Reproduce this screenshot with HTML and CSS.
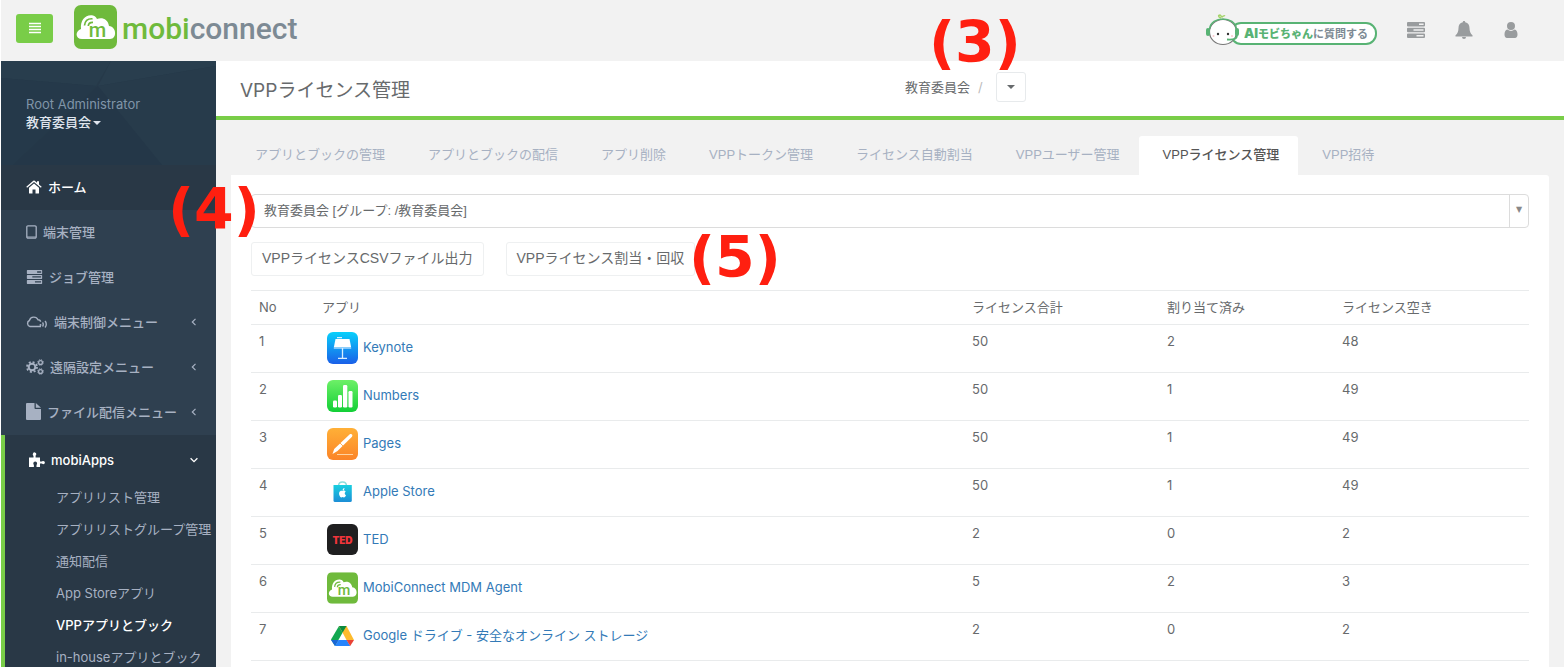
FILE: index.html
```html
<!DOCTYPE html>
<html lang="ja">

<head>
    <meta charset="UTF-8">
    <title>VPPライセンス管理</title>
    <link rel="stylesheet" href="styles.css">
</head>

<body>
    <!-- shared icons -->
    <svg class="defs" width="0" height="0">
        <symbol id="mobi" viewBox="0 0 43 44">
            <rect width="43" height="44" rx="7" fill="#6fba3c" />
            <path d="M8 34C1 34 1 26 7 24C6 15 12 9 19 10.500C21 11 22 12 23 14C28 12 34 14 35 21C43 22 43 34 36 34Z" fill="#fff" />
            <path d="M10.500 20.500C11 16 14 13.500 18.500 13.800M14.300 21C14.500 18.500 16.200 17.300 19 17.400" fill="none" stroke="#6fba3c" stroke-width="1.700" />
        </symbol>
        <symbol id="tasks" viewBox="0 0 18 16">
            <path fill-rule="evenodd" fill="currentColor" d="M1 0h16a1 1 0 0 1 1 1v2.500a1 1 0 0 1-1 1H1a1 1 0 0 1-1-1V1a1 1 0 0 1 1-1zM12 1.500h4.600V3H12zM1 5.700h16a1 1 0 0 1 1 1v2.500a1 1 0 0 1-1 1H1a1 1 0 0 1-1-1V6.700a1 1 0 0 1 1-1zM6.500 7.200h10v1.500h-10zM1 11.400h16a1 1 0 0 1 1 1v2.500a1 1 0 0 1-1 1H1a1 1 0 0 1-1-1v-2.500a1 1 0 0 1 1-1zM9.500 12.900h7v1.500h-7z" />
        </symbol>
        <symbol id="left" viewBox="0 0 8 8">
            <path d="M5.500 .8L2.300 4l3.200 3.200" fill="none" stroke="currentColor" stroke-width="1.200" />
        </symbol>
        <symbol id="down" viewBox="0 0 8 8">
            <path d="M.6 2.300L4 5.700l3.400-3.400" fill="none" stroke="currentColor" stroke-width="1.300" />
        </symbol>
    </svg>

    <div class="page">
        <header class="topbar">
            <button type="button" class="minimalize" aria-label="メニュー">
                <svg width="12" height="12" viewBox="0 0 12 12"><path d="M0 1.500h12M0 4.500h12M0 7.500h12M0 10.500h12" stroke="#fff" stroke-width="1.500" /></svg>
            </button>
            <a href="#" class="brand">
                <svg width="43" height="44" viewBox="0 0 43 44"><use href="#mobi" width="43" height="44" /><text class="mobi-m" x="23.500" y="32" text-anchor="middle">m</text></svg>
                <span class="brand-name"><span class="brand-mobi">mobi</span>connect</span>
            </a>
            <nav class="top-links">
                <a href="#" class="ai-chat">
                    <svg class="ai-face" width="34" height="32" viewBox="0 0 34 32">
                        <path d="M15 4c-3-1-3-3-1-3l2 2c1-1 2-2 3-1" fill="none" stroke="#a5d46a" stroke-width="1.500" />
                        <ellipse cx="17" cy="18" rx="13.500" ry="12.500" fill="#fff" stroke="#777" stroke-width="1.200" />
                        <path d="M3.500 15C5 1.500 29 1.500 30.500 15" fill="none" stroke="#58b374" stroke-width="1.500" />
                        <rect x="0" y="14" width="4" height="8" rx="2" fill="#58b374" />
                        <rect x="29" y="14" width="4" height="8" rx="2" fill="#58b374" />
                        <path d="M31 21c0 4-3 5-10 4.500" fill="none" stroke="#58b374" stroke-width="1.800" />
                        <circle cx="12" cy="20" r="1.200" fill="#333" />
                        <circle cx="22" cy="20" r="1.200" fill="#333" />
                        <circle cx="7.500" cy="22" r="1" fill="#fbc9cf" />
                        <circle cx="26" cy="22" r="1" fill="#fbc9cf" />
                    </svg>
                    <span class="ai-label"><b><span class="ai-big">AI</span>モビちゃん</b>に質問する</span>
                </a>
                <a href="#" aria-label="ジョブ"><svg width="18" height="16"><use href="#tasks" /></svg></a>
                <a href="#" aria-label="通知">
                    <svg width="18" height="18" viewBox="0 0 18 18"><path fill="currentColor" d="M9 0c.8 0 1.200.5 1.200 1.300 3 .6 4.300 3 4.300 5.700 0 3.500 1 5.500 3 7.300V15.500H.5V14.300c2-1.800 3-3.800 3-7.300 0-2.700 1.300-5.100 4.300-5.700C7.800.5 8.200 0 9 0zM7 16h4a2 2 0 0 1-4 0z" /></svg>
                </a>
                <a href="#" aria-label="ユーザー">
                    <svg width="16" height="16" viewBox="0 0 16 16"><path fill="currentColor" d="M8 0a4 4 0 1 1 0 8 4 4 0 0 1 0-8zM4.500 7.500a5 5 0 0 0 7 0c2.200.2 3 2.500 3 5 0 2-1 3.500-2.500 3.500H4c-1.500 0-2.500-1.500-2.500-3.500 0-2.500.8-4.800 3-5z" /></svg>
                </a>
            </nav>
        </header>

        <div class="body-row">
            <aside class="sidebar">
                <div class="profile">
                    <svg class="profile-bg" viewBox="0 0 215 104" preserveAspectRatio="none">
                        <path d="M0 0h110L95 25 0 17z" fill="#283d4d" />
                        <path d="M0 17l95 8-83 79H0z" fill="#25394a" />
                        <path d="M110 0h105v5L97 25z" fill="#293e4e" />
                        <path d="M97 25l32 35 32 44H12z" fill="#243748" />
                        <path d="M97 25L215 5v99h-54z" fill="#273b4b" />
                    </svg>
                    <div class="role">Root Administrator</div>
                    <a href="#" class="org">教育委員会<span class="caret"></span></a>
                </div>
                <nav>
                    <a href="#" class="item home">
                        <svg width="16" height="14" viewBox="0 0 16 14"><path fill="currentColor" d="M8 3.500l5 4.300V13a.6.6 0 0 1-.6.6H9.500V9.500h-3v4.100H3.600A.6.600 0 0 1 3 13V7.800zM.3 6.800L7.300.8a1 1 0 0 1 1.400 0l2.300 2V1.200h2v3.300l2.700 2.300-.8.900L8 2 1.100 7.700z" /></svg>
                        ホーム
                    </a>
                    <a href="#" class="item">
                        <svg width="11" height="14" viewBox="0 0 11 14"><path fill="none" stroke="currentColor" stroke-width="1.300" d="M2 .8h7a1.200 1.200 0 0 1 1.200 1.200v10A1.200 1.200 0 0 1 9 13.200H2A1.200 1.200 0 0 1 .8 12V2A1.200 1.200 0 0 1 2 .8z" /><path stroke="currentColor" d="M1 12h9" /></svg>
                        端末管理
                    </a>
                    <a href="#" class="item">
                        <svg width="17" height="14" viewBox="0 0 18 16"><use href="#tasks" width="18" height="16" /></svg>
                        ジョブ管理
                    </a>
                    <a href="#" class="item">
                        <svg width="22" height="14" viewBox="0 0 22 14"><path fill="none" stroke="currentColor" stroke-width="1.400" d="M15 11.500H4a3.200 3.200 0 0 1-.6-6A4.600 4.600 0 0 1 12 4.800c2 0 2.500 1 2.600 2M16.500 7.500c1 1 1 3 0 4M19 6c1.700 1.500 1.700 5 0 6.500" /><circle cx="14.500" cy="10" r="1" fill="currentColor" /></svg>
                        端末制御メニュー
                        <svg class="arrow" width="8" height="8"><use href="#left" /></svg>
                    </a>
                    <a href="#" class="item">
                        <svg width="18" height="16" viewBox="0 0 18 16"><g fill="none" stroke="currentColor"><circle cx="6" cy="8" r="3.300" stroke-width="2" /><circle cx="6" cy="8" r="5" stroke-width="1.800" stroke-dasharray="2 1.930" /><circle cx="14.500" cy="3.500" r="1.900" stroke-width="1.300" /><circle cx="14.500" cy="3.500" r="2.800" stroke-width="1" stroke-dasharray="1.200 1" /><circle cx="14.500" cy="12.500" r="1.900" stroke-width="1.300" /><circle cx="14.500" cy="12.500" r="2.800" stroke-width="1" stroke-dasharray="1.200 1" /></g></svg>
                        遠隔設定メニュー
                        <svg class="arrow" width="8" height="8"><use href="#left" /></svg>
                    </a>
                    <a href="#" class="item">
                        <svg width="15" height="17" viewBox="0 0 15 17"><path fill="currentColor" d="M1 0h7.500v5a1 1 0 0 0 1 1H15v10a1 1 0 0 1-1 1H1a1 1 0 0 1-1-1V1a1 1 0 0 1 1-1zM9.800 0L15 4.800H9.800z" /></svg>
                        ファイル配信メニュー
                        <svg class="arrow" width="8" height="8"><use href="#left" /></svg>
                    </a>
                    <div class="section">
                        <a href="#" class="item">
                            <svg width="16" height="16" viewBox="0 0 16 16"><path fill="currentColor" d="M0 5.500h4.500V4A2 2 0 0 1 4 1.500 1.700 1.700 0 0 1 7.300 2c0 1-.7 1.300-.7 2v1.500h4.400v4h1.500c.7 0 1-.6 1.700-.6a1.700 1.700 0 0 1 0 3.400c-.8 0-1-.7-1.700-.7H11V15H7.500v-1.800c0-.5.600-1 .6-1.700a1.900 1.900 0 0 0-3.800 0c0 .7.600 1.200.6 1.700V15H0z" /></svg>
                            mobiApps
                            <svg class="arrow" width="8" height="8"><use href="#down" /></svg>
                        </a>
                        <ul class="submenu">
                            <li><a href="#">アプリリスト管理</a></li>
                            <li><a href="#">アプリリストグループ管理</a></li>
                            <li><a href="#">通知配信</a></li>
                            <li><a href="#">App Storeアプリ</a></li>
                            <li><a href="#" class="current">VPPアプリとブック</a></li>
                            <li><a href="#">in-houseアプリとブック</a></li>
                        </ul>
                    </div>
                </nav>
            </aside>

            <main class="content">
                <div class="heading">
                    <h1>VPPライセンス管理</h1>
                    <div class="breadcrumb">
                        <a href="#">教育委員会</a><span class="slash">/</span>
                        <button type="button" aria-label="グループ選択"><span class="caret"></span></button>
                    </div>
                </div>

                <div class="wrapper">
                    <nav class="tabs">
                        <a href="#">アプリとブックの管理</a>
                        <a href="#">アプリとブックの配信</a>
                        <a href="#">アプリ削除</a>
                        <a href="#">VPPトークン管理</a>
                        <a href="#">ライセンス自動割当</a>
                        <a href="#">VPPユーザー管理</a>
                        <a href="#" class="active">VPPライセンス管理</a>
                        <a href="#">VPP招待</a>
                    </nav>
                    <div class="panel">
                        <div class="group-select">
                            <select aria-label="グループ">
                                <option>教育委員会 [グループ: /教育委員会]</option>
                            </select>
                        </div>
                        <div class="buttons">
                            <button type="button">VPPライセンスCSVファイル出力</button>
                            <button type="button">VPPライセンス割当・回収</button>
                        </div>
                        <table>
                            <thead>
                                <tr>
                                    <th class="no">No</th>
                                    <th>アプリ</th>
                                    <th class="total">ライセンス合計</th>
                                    <th class="used">割り当て済み</th>
                                    <th class="free">ライセンス空き</th>
                                </tr>
                            </thead>
                            <tbody>
                                <tr>
                                    <td>1</td>
                                    <td><a href="#" class="app">
                                        <svg width="31" height="32" viewBox="0 0 31 32"><defs><linearGradient id="kn" x2="0" y2="1"><stop stop-color="#08d0fb" /><stop offset="1" stop-color="#1a5fe8" /></linearGradient></defs><rect width="31" height="32" rx="6" fill="url(#kn)" /><path d="M8.500 7h14l1.700 8.500H6.800z" fill="#fff" /><path d="M6.800 16.300h17.400" stroke="#9fd4ff" /><path d="M15.500 16v10M11 26.300h9M10 5.700h5" stroke="#d9f0ff" stroke-width="1.300" /></svg>
                                        Keynote</a></td>
                                    <td>50</td>
                                    <td>2</td>
                                    <td>48</td>
                                </tr>
                                <tr>
                                    <td>2</td>
                                    <td><a href="#" class="app">
                                        <svg width="31" height="32" viewBox="0 0 31 32"><defs><linearGradient id="nm" x2="0" y2="1"><stop stop-color="#6df067" /><stop offset="1" stop-color="#12cf36" /></linearGradient></defs><rect width="31" height="32" rx="6" fill="url(#nm)" /><g fill="#fff"><rect x="6" y="20.500" width="4" height="7" rx="1.200" /><rect x="11" y="15" width="4" height="12.500" rx="1.200" /><rect x="16" y="5" width="4.300" height="22.500" rx="1.300" /><rect x="21.500" y="11" width="4" height="16.500" rx="1.200" /></g></svg>
                                        Numbers</a></td>
                                    <td>50</td>
                                    <td>1</td>
                                    <td>49</td>
                                </tr>
                                <tr>
                                    <td>3</td>
                                    <td><a href="#" class="app">
                                        <svg width="31" height="32" viewBox="0 0 31 32"><defs><linearGradient id="pg" x2="0" y2="1"><stop stop-color="#ffb037" /><stop offset="1" stop-color="#fb8428" /></linearGradient></defs><rect width="31" height="32" rx="6" fill="url(#pg)" /><path d="M5.500 26l1.700-5L22.500 6.500c2-1.300 3.600.3 2.500 2.300L10.500 23z" fill="#fff" /><path d="M13 15l3.500 3.500" stroke="#fd9a30" stroke-width=".8" /><path d="M10 26.500h16" stroke="#ffd2a0" /></svg>
                                        Pages</a></td>
                                    <td>50</td>
                                    <td>1</td>
                                    <td>49</td>
                                </tr>
                                <tr>
                                    <td>4</td>
                                    <td><a href="#" class="app">
                                        <svg width="31" height="32" viewBox="0 0 31 32"><defs><linearGradient id="as" x2="0" y2="1"><stop stop-color="#18cfe0" /><stop offset="1" stop-color="#1c8ed6" /></linearGradient></defs><path d="M11.500 10c0-5.500 8-5.500 8 0" fill="none" stroke="#8edfdc" stroke-width="1.500" /><path d="M6.500 9h18.300v15.500a1.500 1.500 0 0 1-1.500 1.500H8a1.500 1.500 0 0 1-1.500-1.500z" fill="url(#as)" /><path d="M15.500 15c1.200-.8 2.500-.5 3.200.5-1.500 1-1.200 3 .3 3.700-1 2.300-1.800 2.500-3.300 1.900-1.800.7-2.500.1-3.200-1.600-1.200-3 .5-5.500 3-4.500zM15.600 14.500c0-1.300.7-2.200 1.900-2.500 0 1.300-.7 2.300-1.900 2.500z" fill="#fff" /></svg>
                                        Apple Store</a></td>
                                    <td>50</td>
                                    <td>1</td>
                                    <td>49</td>
                                </tr>
                                <tr>
                                    <td>5</td>
                                    <td><a href="#" class="app">
                                        <svg width="31" height="32" viewBox="0 0 31 32"><rect width="31" height="31" rx="6" fill="#1f1f20" /><text class="ted" x="15.500" y="19.500" text-anchor="middle">TED</text></svg>
                                        TED</a></td>
                                    <td>2</td>
                                    <td>0</td>
                                    <td>2</td>
                                </tr>
                                <tr>
                                    <td>6</td>
                                    <td><a href="#" class="app">
                                        <svg width="31" height="32" viewBox="0 0 43 44"><use href="#mobi" width="43" height="44" /><text class="mobi-m" x="23.500" y="32" text-anchor="middle">m</text></svg>
                                        MobiConnect MDM Agent</a></td>
                                    <td>5</td>
                                    <td>2</td>
                                    <td>3</td>
                                </tr>
                                <tr>
                                    <td>7</td>
                                    <td><a href="#" class="app">
                                        <svg width="31" height="32" viewBox="0 0 31 32"><path d="M12 6h7.500l-4 6.500z" fill="#0b8a3d" /><path d="M12 6l3.700 6.500L8 26l-4-6.500z" fill="#12a850" /><path d="M12 6h7.500l7.500 14h-7.500z" fill="#fdbb2d" /><path d="M12 6h7.500l-3.800 6.500z" fill="#0b8a3d" /><path d="M11.500 20h8.300l3.400 6H8z" fill="#2684fc" /><path d="M4 20h7.500L8 26z" fill="#1a66d6" /><path d="M19.500 20H27l-3.800 6z" fill="#e94335" /></svg>
                                        Google ドライブ - 安全なオンライン ストレージ</a></td>
                                    <td>2</td>
                                    <td>0</td>
                                    <td>2</td>
                                </tr>
                            </tbody>
                        </table>
                    </div>
                </div>
            </main>
        </div>

        <!-- step markers -->
        <div class="marker marker3">(3)</div>
        <div class="marker marker4">(4)</div>
        <div class="marker marker5">(5)</div>
    </div>
</body>

</html>
```

FILE: styles.css
```css
* {
    box-sizing: border-box;
    margin: 0;
    padding: 0;
}

body {
    height: 100vh;
    overflow: hidden;
    background-color: #fff;
    color: #676a6c;
    font-family: Inter, "Noto Sans CJK JP", sans-serif;
    font-size: 13px;
    line-height: 18px;
}

a {
    color: inherit;
    text-decoration: none;
}

button,
select {
    font-family: "Liberation Sans", "Noto Sans CJK JP", sans-serif;
    color: inherit;
    background-color: #fff;
    cursor: pointer;
}

svg {
    flex-shrink: 0;
}

.defs {
    position: absolute;
}

.mobi-m {
    fill: #6fba3c;
    font-family: Roboto, sans-serif;
    font-size: 20px;
    font-weight: 500;
}

.ted {
    fill: #f0353b;
    font-family: Inter, sans-serif;
    font-size: 10px;
    font-weight: 900;
}

.page {
    position: relative;
    display: flex;
    flex-direction: column;
    height: calc(100vh - 3px);
    margin-left: 1px;
    overflow: hidden;
}

.caret {
    display: inline-block;
    margin-left: 2px;
    border: 4px solid transparent;
    border-top-color: currentColor;
    border-bottom: 0;
    vertical-align: middle;
}

/* top bar */
.topbar {
    display: flex;
    align-items: center;
    height: 61px;
    flex-shrink: 0;
    padding: 0 45px 5px 15px;
    background-color: #f2f2f2;
}

.minimalize {
    display: flex;
    align-items: center;
    justify-content: center;
    width: 37px;
    height: 29px;
    border: 0;
    border-radius: 3px;
    background-color: #79cd48;
}

.brand {
    display: flex;
    align-items: center;
    gap: 5px;
    margin-left: 21px;
    padding-bottom: 2px;
}

.brand-name {
    padding-top: 3px;
    font-family: Roboto, sans-serif;
    font-size: 30px;
    font-weight: 500;
    line-height: 40px;
    color: #7d8a94;
}

.brand-mobi {
    color: #6fba3c;
}

.top-links {
    display: flex;
    align-items: center;
    gap: 30px;
    margin-left: auto;
    padding-top: 4px;
    color: #999c9e;
}

.top-links svg {
    display: block;
}

.ai-chat {
    display: flex;
    align-items: center;
}

.ai-face {
    position: relative;
}

.ai-label {
    margin-left: -10px;
    margin-top: 7px;
    padding: 0 7px 0 12px;
    border: 2px solid #58b374;
    border-radius: 11px;
    background-color: #fff;
    color: #7d8a94;
    font-size: 11px;
    font-weight: 600;
}

.ai-label b {
    color: #58b374;
}

.ai-big {
    font-size: 13px;
}

.body-row {
    display: flex;
    flex: 1;
    min-height: 0;
}

/* sidebar */
.sidebar {
    width: 215px;
    flex-shrink: 0;
    background-color: #2f4050;
    color: #a7b1c2;
    font-weight: 500;
}

.profile {
    position: relative;
    height: 104px;
    padding: 34px 25px 0;
    background-color: #263949;
}

.profile-bg {
    position: absolute;
    top: 0;
    left: 0;
    width: 100%;
    height: 100%;
}

.role,
.org {
    position: relative;
    display: block;
}

.role {
    color: #8095a8;
    font-weight: 400;
}

.org {
    color: #dfe4ed;
    font-weight: 500;
}

.item {
    display: flex;
    align-items: center;
    gap: 6px;
    height: 45px;
    padding: 0 18px 2px 25px;
}

.arrow {
    margin-left: auto;
}

.home {
    background-color: #293846;
    color: #fff;
}

.section {
    height: 300px;
    padding-top: 3px;
    border-left: 4px solid #79cd48;
    background-color: #293846;
}

.section .item {
    padding-left: 24px;
    color: #fff;
}

.submenu {
    list-style: none;
}

.submenu a {
    display: block;
    padding: 5px 0 9px 51px;
    white-space: nowrap;
    font-weight: 400;
}

.submenu .current {
    color: #fff;
    font-weight: 500;
}

/* content */
.content {
    flex: 1;
    min-width: 0;
    background-color: #f2f2f2;
}

.heading {
    display: grid;
    grid-template-columns: 1fr 1fr;
    align-items: center;
    height: 59px;
    border-bottom: 4px solid #79cd48;
    background-color: #fff;
}

.heading h1 {
    padding: 4px 0 0 24px;
    font-size: 19px;
    font-weight: 400;
    line-height: 24px;
}

.breadcrumb {
    display: flex;
    align-items: center;
    padding: 0 0 4px 15px;
}

.slash {
    margin: 0 13px 0 8px;
    color: #bbb;
}

.breadcrumb button {
    width: 30px;
    height: 30px;
    border: 1px solid #e7eaec;
    border-radius: 3px;
    line-height: 10px;
}

.breadcrumb .caret {
    margin-left: 0;
}

.wrapper {
    padding: 16px 15px 0;
}

.tabs {
    display: flex;
    font-family: "Liberation Sans", "Noto Sans CJK JP", sans-serif;
}

.tabs a {
    padding: 10px 19px 11px 24px;
    color: #a7b1c2;
    border-radius: 3px 3px 0 0;
    white-space: nowrap;
}

.tabs .active {
    background-color: #fff;
    color: #555;
    font-weight: 500;
}

.panel {
    height: 600px;
    padding: 19px 20px;
    background-color: #fff;
    border-radius: 0 3px 0 0;
}

.group-select {
    position: relative;
}

.group-select select {
    display: block;
    width: 100%;
    height: 34px;
    padding: 0 12px 2px;
    border: 1px solid #dcdcdc;
    border-radius: 4px;
    font-size: 13px;
    appearance: none;
}

.group-select::after {
    content: "▼";
    position: absolute;
    top: 1px;
    right: 1px;
    width: 18px;
    height: 32px;
    border-left: 1px solid #dcdcdc;
    color: #888;
    font-family: "DejaVu Sans", sans-serif;
    font-size: 8px;
    line-height: 30px;
    text-align: center;
    pointer-events: none;
}

.buttons {
    display: flex;
    gap: 22px;
    margin: 14px 0;
}

.buttons button {
    height: 34px;
    padding: 0 10px 4px;
    border: 1px solid #eef0f1;
    border-radius: 3px;
    font-size: 14px;
}

table {
    width: 100%;
    table-layout: fixed;
    border-collapse: collapse;
}

th,
td {
    padding: 7px 8px 8px;
    border-top: 1px solid #e9ebec;
    font-weight: 400;
    text-align: left;
    vertical-align: top;
}

tbody tr:last-child {
    border-bottom: 1px solid #e9ebec;
}

.no {
    width: 63px;
}

.total,
.free {
    width: 195px;
}

.used {
    width: 175px;
}

.app {
    display: flex;
    gap: 5px;
    padding-left: 5px;
    color: #337ab7;
    line-height: 30px;
}

/* step markers */
.marker {
    position: absolute;
    color: #ff1f10;
    font-family: "DejaVu Sans", sans-serif;
    font-size: 57px;
    font-weight: bold;
    line-height: 60px;
}

.marker3 {
    top: 12px;
    left: 928px;
}

.marker4 {
    top: 179px;
    left: 167px;
}

.marker5 {
    top: 227px;
    left: 688px;
}
```
